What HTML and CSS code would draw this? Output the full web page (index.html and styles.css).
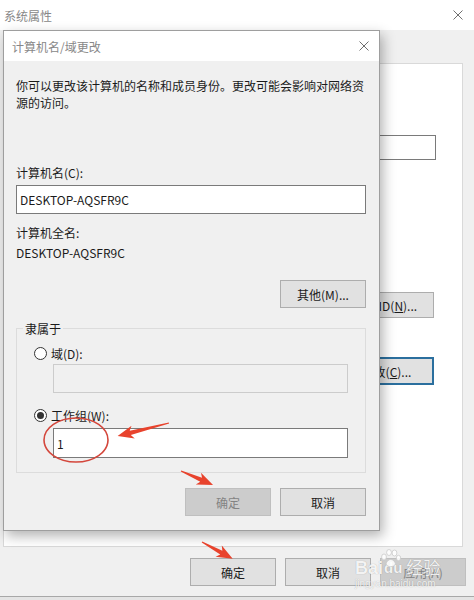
FILE: index.html
```html
<!DOCTYPE html>
<html lang="zh-CN">
<head>
    <meta charset="UTF-8">
    <meta name="viewport" content="width=device-width, initial-scale=1.0">
    <title>系统属性</title>
    <link rel="stylesheet" href="styles.css">
</head>
<body>
    <div class="window">
        <div class="titlebar">
            <span class="title">系统属性</span>
            <svg class="close" width="10" height="10" viewBox="0 0 10 10">
                <path d="M0.5 0.5 L9.5 9.5 M9.5 0.5 L0.5 9.5" stroke="#6f6f6f" stroke-width="1" fill="none"/>
            </svg>
        </div>

        <div class="content">
            <div class="panel">
                <div class="panel-input"></div>
                <button class="btn net-btn">网络 ID(<u>N</u>)...</button>
                <button class="btn change-btn">更改(<u>C</u>)...</button>
            </div>
        </div>

        <div class="footer">
            <button class="btn">确定</button>
            <button class="btn">取消</button>
            <button class="btn disabled">应用(A)</button>
        </div>

        <div class="dialog">
            <div class="dialog-titlebar">
                <span class="title">计算机名/域更改</span>
                <svg class="close" width="10" height="10" viewBox="0 0 10 10">
                    <path d="M0.5 0.5 L9.5 9.5 M9.5 0.5 L0.5 9.5" stroke="#6f6f6f" stroke-width="1" fill="none"/>
                </svg>
            </div>

            <div class="dialog-body">
                <p class="desc">你可以更改该计算机的名称和成员身份。更改可能会影响对网络资<br>源的访问。</p>

                <div class="label name-label">计算机名(C):</div>
                <input class="field" type="text" value="DESKTOP-AQSFR9C">

                <div class="label full-label">计算机全名:</div>
                <div class="label full-value">DESKTOP-AQSFR9C</div>

                <div class="row more-row">
                    <button class="btn">其他(M)...</button>
                </div>

                <fieldset class="group">
                    <legend>隶属于</legend>
                    <div class="radio-row first">
                        <span class="radio"></span>
                        <span>域(D):</span>
                    </div>
                    <input class="field sub-field" type="text" disabled>
                    <div class="radio-row second">
                        <span class="radio checked"></span>
                        <span>工作组(W):</span>
                    </div>
                    <input class="field sub-field workgroup" type="text" value="1">
                </fieldset>

                <div class="row dialog-buttons">
                    <button class="btn disabled">确定</button>
                    <button class="btn">取消</button>
                </div>
            </div>
        </div>

        <svg class="marks" width="474" height="600" viewBox="0 0 474 600">
            <ellipse cx="76" cy="440" rx="32" ry="22" fill="none" stroke="#d4473c" stroke-width="1.6"/>
            <g fill="#e8432d">
                <g transform="translate(169 423) rotate(165.7)">
                    <polygon points="0,-0.6 40,-2.2 37,-6.5 53,0 37,6.5 40,2.2 0,0.6"/>
                </g>
                <g transform="translate(181 471) rotate(23.6)">
                    <polygon points="0,-0.6 22,-2.2 19,-6.5 35,0 19,6.5 22,2.2 0,0.6"/>
                </g>
                <g transform="translate(202 542) rotate(28.7)">
                    <polygon points="0,-0.6 22,-2.2 19,-6.5 35,0 19,6.5 22,2.2 0,0.6"/>
                </g>
            </g>
        </svg>

        <div class="watermark">
            <div class="wm-logo">
                <span class="wm-bai">Bai</span>
                <span class="wm-du">du</span>
                <svg class="wm-paw" width="22" height="20" viewBox="0 0 22 20">
                    <g fill="rgba(255,255,255,0.85)" stroke="#c4c4c4" stroke-width="0.7">
                        <ellipse cx="4" cy="9" rx="2.4" ry="3"/>
                        <ellipse cx="9" cy="4.5" rx="2.4" ry="3"/>
                        <ellipse cx="14.5" cy="5" rx="2.4" ry="3"/>
                        <ellipse cx="18.5" cy="10" rx="2.2" ry="2.7"/>
                        <path d="M6 16 C7.5 10 14 10 15.5 16 C14 19.5 7.5 19.5 6 16 Z"/>
                    </g>
                </svg>
                <span class="wm-jy">经验</span>
            </div>
            <div class="wm-url">jingyan.baidu.com</div>
        </div>
    </div>
</body>
</html>
```

FILE: styles.css
```css
* {
    box-sizing: border-box;
}

body {
    margin: 0;
    background-color: #e4e4e4;
    font-family: "Noto Sans CJK SC", "Noto Sans", sans-serif;
    font-size: 12px;
    color: #1b1b1b;
}

.window {
    position: relative;
    width: 474px;
    height: 597px;
    background-color: #f0f0f0;
    border-bottom: 1px solid #a8a8a8;
}

.titlebar {
    height: 30px;
    background-color: #fff;
    display: flex;
    align-items: center;
    justify-content: space-between;
    padding: 0 11px 0 4px;
}

.title {
    color: #888;
    line-height: 17px;
}

.close {
    display: block;
}

.content {
    padding: 33px 11px 0 3px;
}

.panel {
    height: 484px;
    background-color: #fff;
    border: 1px solid #d9d9d9;
    display: flex;
    flex-direction: column;
    align-items: flex-end;
    padding: 71px 26px 0 0;
}

.panel-input {
    width: 260px;
    height: 25px;
    border: 1px solid #7a7a7a;
}

.btn {
    width: 86px;
    height: 28px;
    padding: 0;
    background-color: #e1e1e1;
    border: 1px solid #adadad;
    font-family: inherit;
    font-size: 12px;
    line-height: 17px;
    color: #1b1b1b;
}

.btn.disabled {
    background-color: #cccccc;
    border-color: #bfbfbf;
    color: #838383;
}

.net-btn {
    width: 99px;
    height: 26px;
    margin-top: 132px;
    margin-right: 2px;
}

.change-btn {
    width: 95px;
    margin-top: 39px;
    margin-right: 2px;
    border: 2px solid #2b6f9e;
}

.footer {
    display: flex;
    justify-content: flex-end;
    gap: 9px;
    padding: 11px 8px 0 0;
}

/* inner dialog floats over the system properties window */
.dialog {
    position: absolute;
    left: 3px;
    top: 30px;
    width: 377px;
    height: 501px;
    background-color: #f0f0f0;
    border: 1px solid #9e9e9e;
    box-shadow: 3px 5px 12px rgba(0, 0, 0, 0.3);
}

.dialog-titlebar {
    height: 30px;
    background-color: #fff;
    display: flex;
    align-items: center;
    justify-content: space-between;
    padding: 0 10px 0 8px;
}

.dialog-body {
    padding: 16px 13px 0 12px;
}

.desc {
    margin: 0;
    line-height: 17px;
    white-space: nowrap;
}

.label {
    line-height: 17px;
}

.name-label {
    margin-top: 53px;
}

.field {
    display: block;
    width: 100%;
    height: 29px;
    margin: 4px 0 0;
    padding: 0 3px;
    background-color: #fff;
    border: 1px solid #7a7a7a;
    font-family: inherit;
    font-size: 12px;
    color: #1b1b1b;
    outline: none;
}

.full-label {
    margin-top: 10px;
}

.full-value {
    margin-top: 3px;
}

.row {
    display: flex;
    justify-content: flex-end;
    gap: 9px;
}

.more-row {
    margin-top: 19px;
}

.group {
    margin: 12px 0 0;
    padding: 0 0 14px;
    border: 1px solid #dcdcdc;
    min-width: 0;
}

.group legend {
    margin-left: 6px;
    padding: 0 2px;
    line-height: 17px;
}

.radio-row {
    display: flex;
    align-items: center;
    gap: 4px;
    height: 17px;
    padding-left: 17px;
}

.radio-row.first {
    margin-top: 8px;
}

.radio-row.second {
    margin-top: 14px;
}

.radio {
    width: 13px;
    height: 13px;
    border: 1px solid #333;
    border-radius: 50%;
    background-color: #fff;
    display: flex;
    align-items: center;
    justify-content: center;
}

.radio.checked::after {
    content: "";
    width: 7px;
    height: 7px;
    border-radius: 50%;
    background-color: #333;
}

.sub-field {
    width: 295px;
    margin: 2px 0 0 36px;
}

.sub-field:disabled {
    background-color: #f0f0f0;
    border-color: #cccccc;
}

.workgroup {
    height: 30px;
    margin-top: 4px;
}

.dialog-buttons {
    margin-top: 15px;
}

.marks {
    position: absolute;
    left: 0;
    top: 0;
    pointer-events: none;
}

/* baidu jingyan watermark over the bottom right corner */
.watermark {
    position: absolute;
    left: 355px;
    top: 548px;
    pointer-events: none;
    white-space: nowrap;
    color: rgba(255, 255, 255, 0.88);
    text-shadow: 0 0 1px rgba(0, 0, 0, 0.3);
}

.wm-logo {
    display: flex;
    align-items: flex-end;
    height: 30px;
}

.wm-bai,
.wm-du {
    font-family: "Liberation Sans", Arial, sans-serif;
    font-size: 18px;
    font-weight: bold;
    line-height: 20px;
}

.wm-du {
    font-size: 15px;
    margin-left: 1px;
}

.wm-paw {
    margin: 0 0 10px -22px;
}

.wm-jy {
    margin-left: 4px;
    font-size: 17px;
    line-height: 22px;
}

.wm-url {
    font-family: "Liberation Sans", Arial, sans-serif;
    font-size: 10px;
    line-height: 12px;
}
```
